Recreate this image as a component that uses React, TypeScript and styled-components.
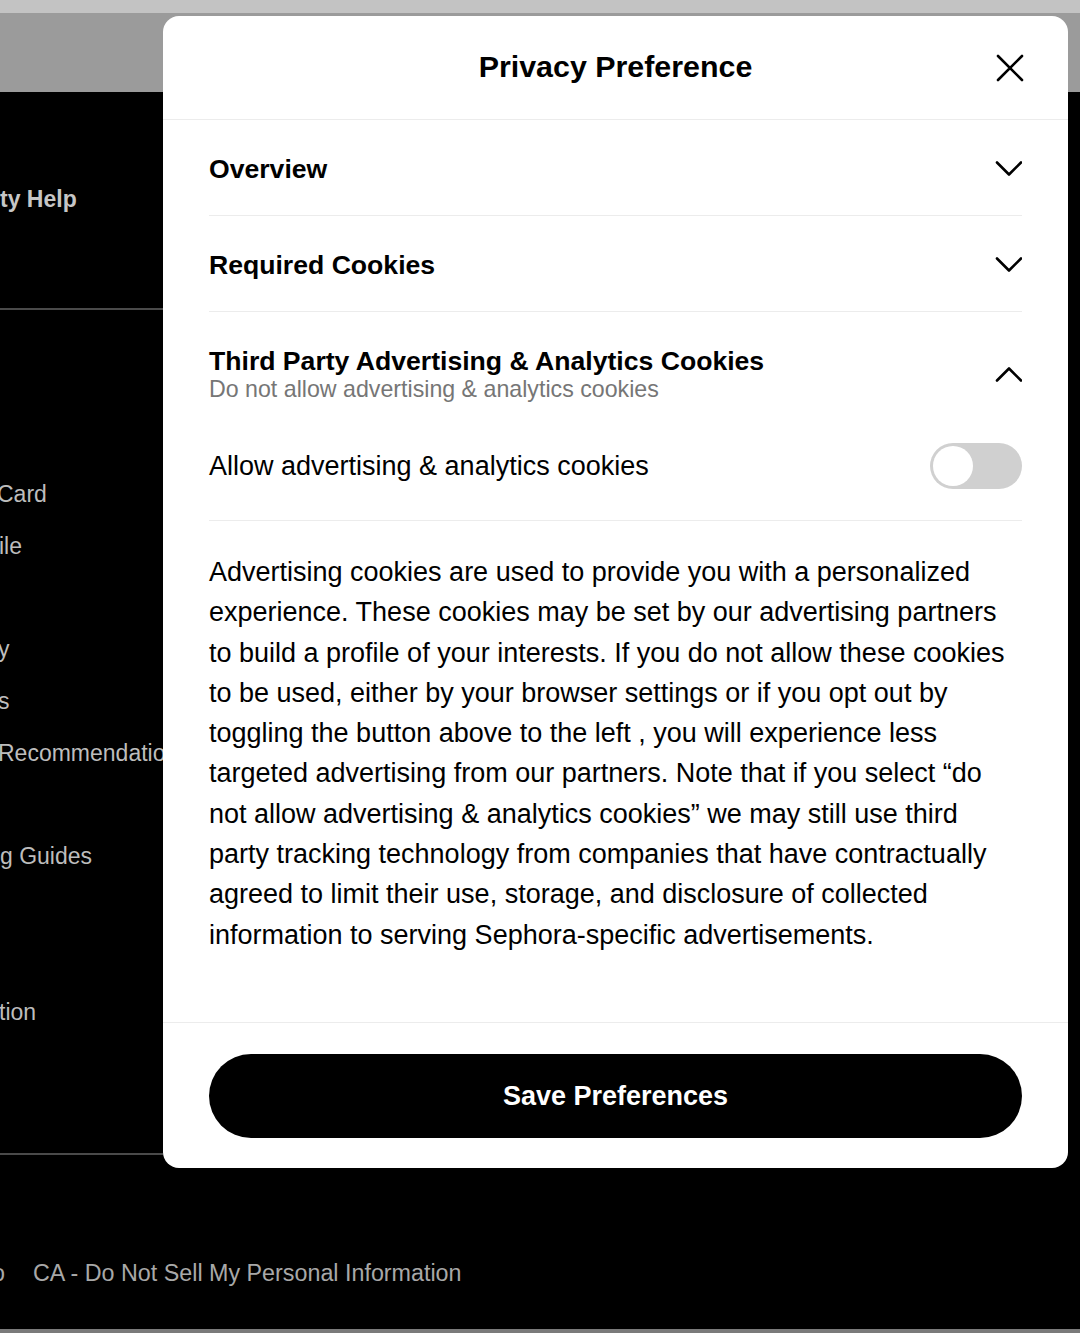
import * as React from "react";
import styled, { createGlobalStyle } from "styled-components";

const GlobalStyle = createGlobalStyle`
  html, body {
    margin: 0;
    padding: 0;
    background: #000;
  }
  body {
    font-family: "Liberation Sans", Arial, Helvetica, sans-serif;
    overflow: hidden;
  }
  * {
    box-sizing: border-box;
  }
`;

const Screen = styled.div`
    position: relative;
    width: 1080px;
    height: 1333px;
    overflow: hidden;
    display: flex;
    flex-direction: column;
    background: #000;
`;

const TopStrip = styled.div`
    flex-shrink: 0;
    height: 13px;
    background: #c3c3c3;
`;

const HeaderBand = styled.div`
    flex-shrink: 0;
    height: 79px;
    background: #9b9b9b;
`;

const FooterArea = styled.div`
    flex: 1;
    display: flex;
    flex-direction: column;
    background: #000;
`;

const NavSection = styled.div`
    flex-shrink: 0;
    width: 163px;
    display: flex;
    flex-direction: column;
    border-bottom: 2px solid #4a4a4a;
`;

const NavHeading = styled.div`
    height: 216px;
    display: flex;
    align-items: center;
    padding-bottom: 2px;
    font-size: 23px;
    font-weight: bold;
    color: #c6c6c6;
    white-space: nowrap;
`;

const NavList = styled.div`
    display: flex;
    flex-direction: column;
    padding: 107px 0 114px;
    border-top: 2px solid #4a4a4a;
`;

interface NavItemProps {
    shift?: number;
}

const NavItem = styled.div<NavItemProps>`
    height: 51.8px;
    line-height: 51.8px;
    font-size: 23px;
    color: #bdbdbd;
    white-space: nowrap;
    margin-left: ${(props) => props.shift || 0}px;
`;

const LegalRow = styled.div`
    flex-shrink: 0;
    display: flex;
    align-items: center;
    height: 174px;
    padding: 64px 0 0 0;
    gap: 28px;
    font-size: 23.3px;
    color: #a8a8a8;
    white-space: nowrap;
`;

const LegalDot = styled.span`
    margin-left: -8px;
`;

const BottomRule = styled.div`
    flex-shrink: 0;
    height: 4px;
    background: #7a7a7a;
`;

const Modal = styled.div`
    position: absolute;
    top: 16px;
    left: 163px;
    width: 905px;
    height: 1152px;
    background: #fff;
    border-radius: 16px;
    display: flex;
    flex-direction: column;
    overflow: hidden;
    color: #000;
`;

const ModalHeader = styled.div`
    flex-shrink: 0;
    height: 104px;
    display: grid;
    grid-template-columns: 1fr auto 1fr;
    align-items: center;
    border-bottom: 1px solid #ececec;
`;

const ModalTitle = styled.h1`
    grid-column: 2;
    margin: 0;
    padding-bottom: 2px;
    font-size: 30.4px;
    font-weight: bold;
`;

const CloseButton = styled.button`
    grid-column: 3;
    justify-self: end;
    margin-right: 44px;
    width: 28px;
    height: 28px;
    padding: 0;
    border: none;
    background: none;
    display: flex;
    align-items: center;
    justify-content: center;
`;

const ModalBody = styled.div`
    flex: 1;
    padding: 0 46px;
    display: flex;
    flex-direction: column;
`;

const SectionRow = styled.div`
    flex-shrink: 0;
    height: 96px;
    display: flex;
    align-items: center;
    justify-content: space-between;
    border-bottom: 1px solid #ececec;
    padding-top: 3px;
`;

const SectionTitle = styled.div`
    font-size: 26.6px;
    font-weight: bold;
    line-height: 30px;
`;

const ExpandedHead = styled.div`
    display: flex;
    align-items: center;
    justify-content: space-between;
    padding-top: 34px;
`;

const SectionSub = styled.div`
    font-size: 23.2px;
    line-height: 26px;
    color: #767676;
`;

const ToggleRow = styled.div`
    display: flex;
    align-items: center;
    justify-content: space-between;
    margin-top: 41px;
    padding-bottom: 31px;
    border-bottom: 1px solid #ececec;
    font-size: 27px;
`;

interface TrackProps {
    on: boolean;
}

const Track = styled.div<TrackProps>`
    width: 92px;
    height: 46px;
    border-radius: 23px;
    background: ${(props) => (props.on ? "#000" : "#d0d0d0")};
    padding: 3px;
    display: flex;
    justify-content: ${(props) => (props.on ? "flex-end" : "flex-start")};
`;

const Knob = styled.div`
    width: 40px;
    height: 40px;
    border-radius: 50%;
    background: #fff;
`;

const Paragraph = styled.p`
    margin: 31px 0 0;
    font-size: 27px;
    line-height: 40.3px;
    color: #000;
`;

const ModalFooter = styled.div`
    flex-shrink: 0;
    height: 146px;
    border-top: 1px solid #ececec;
    padding: 31px 46px 30px;
`;

const SaveButton = styled.button`
    width: 100%;
    height: 84px;
    border: none;
    border-radius: 42px;
    background: #000;
    color: #fff;
    font-family: "Liberation Sans", Arial, sans-serif;
    font-size: 27px;
    font-weight: bold;
`;

const Chevron = ({ up }: { up?: boolean }) => (
    <svg width="28" height="16" viewBox="0 0 28 16" fill="none">
        <path
            d={up ? "M3 14.5 L15 2.5 L27 14.5" : "M3 1.5 L15 13.5 L27 1.5"}
            stroke="#000"
            strokeWidth="2.6"
            strokeLinecap="round"
            strokeLinejoin="round"
        />
    </svg>
);

const CloseIcon = () => (
    <svg width="28" height="28" viewBox="0 0 28 28" fill="none">
        <path d="M2 2 L26 26 M26 2 L2 26" stroke="#000" strokeWidth="2.6" strokeLinecap="round" />
    </svg>
);

const navItems = [
    { label: "", shift: 0 },
    { label: "Card", shift: -3 },
    { label: "ile", shift: -1 },
    { label: "", shift: 0 },
    { label: "y", shift: -2 },
    { label: "s", shift: -2 },
    { label: "Recommendations", shift: -2 },
    { label: "", shift: 0 },
    { label: "g Guides", shift: 0 },
    { label: "", shift: 0 },
    { label: "", shift: 0 },
    { label: "tion", shift: -1 },
];

export default function App() {
    const [allowAds, setAllowAds] = React.useState(false);

    return (
        <Screen>
            <GlobalStyle />
            <TopStrip />
            <HeaderBand />
            <FooterArea>
                <NavSection>
                    <NavHeading>ty Help</NavHeading>
                    <NavList>
                        {navItems.map((item, i) => (
                            <NavItem key={i} shift={item.shift}>
                                {item.label}
                            </NavItem>
                        ))}
                    </NavList>
                </NavSection>
                <LegalRow>
                    <LegalDot>o</LegalDot>
                    <span>CA - Do Not Sell My Personal Information</span>
                </LegalRow>
            </FooterArea>
            <BottomRule />

            <Modal>
                <ModalHeader>
                    <ModalTitle>Privacy Preference</ModalTitle>
                    <CloseButton aria-label="Close">
                        <CloseIcon />
                    </CloseButton>
                </ModalHeader>
                <ModalBody>
                    <SectionRow>
                        <SectionTitle>Overview</SectionTitle>
                        <Chevron />
                    </SectionRow>
                    <SectionRow>
                        <SectionTitle>Required Cookies</SectionTitle>
                        <Chevron />
                    </SectionRow>
                    <ExpandedHead>
                        <div>
                            <SectionTitle>Third Party Advertising &amp; Analytics Cookies</SectionTitle>
                            <SectionSub>Do not allow advertising &amp; analytics cookies</SectionSub>
                        </div>
                        <Chevron up />
                    </ExpandedHead>
                    <ToggleRow>
                        <span>Allow advertising &amp; analytics cookies</span>
                        <Track on={allowAds} onClick={() => setAllowAds(!allowAds)}>
                            <Knob />
                        </Track>
                    </ToggleRow>
                    <Paragraph>
                        Advertising cookies are used to provide you with a personalized experience. These
                        cookies may be set by our advertising partners to build a profile of your interests.
                        If you do not allow these cookies to be used, either by your browser settings or if
                        you opt out by toggling the button above to the left , you will experience less
                        targeted advertising from our partners. Note that if you select “do not allow
                        advertising &amp; analytics cookies” we may still use third party tracking technology
                        from companies that have contractually agreed to limit their use, storage, and
                        disclosure of collected information to serving Sephora-specific advertisements.
                    </Paragraph>
                </ModalBody>
                <ModalFooter>
                    <SaveButton>Save Preferences</SaveButton>
                </ModalFooter>
            </Modal>
        </Screen>
    );
}
